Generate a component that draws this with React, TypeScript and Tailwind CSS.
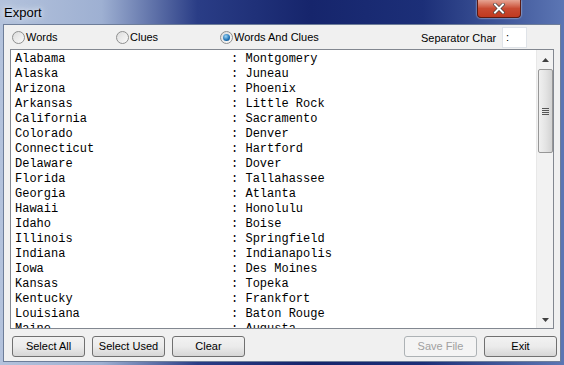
import React from "react";

const data: [string, string][] = [
  ["Alabama", "Montgomery"],
  ["Alaska", "Juneau"],
  ["Arizona", "Phoenix"],
  ["Arkansas", "Little Rock"],
  ["California", "Sacramento"],
  ["Colorado", "Denver"],
  ["Connecticut", "Hartford"],
  ["Delaware", "Dover"],
  ["Florida", "Tallahassee"],
  ["Georgia", "Atlanta"],
  ["Hawaii", "Honolulu"],
  ["Idaho", "Boise"],
  ["Illinois", "Springfield"],
  ["Indiana", "Indianapolis"],
  ["Iowa", "Des Moines"],
  ["Kansas", "Topeka"],
  ["Kentucky", "Frankfort"],
  ["Louisiana", "Baton Rouge"],
  ["Maine", "Augusta"],
  ["Maryland", "Annapolis"],
];

function Radio({ checked, label }: { checked?: boolean; label: string }) {
  return (
    <div className="flex items-center gap-[1px]">
      <div className="w-[13px] h-[13px] rounded-full border border-[#8e8f8f] bg-gradient-to-br from-[#dcdcdc] to-[#fbfbfb] flex items-center justify-center">
        {checked && (
          <div className="w-[7px] h-[7px] rounded-full bg-[radial-gradient(circle_at_40%_35%,#9fd6f5,#1b6fb3_60%,#0b3d6e)]" />
        )}
      </div>
      <span>{label}</span>
    </div>
  );
}

function Btn({ label, disabled }: { label: string; disabled?: boolean }) {
  return (
    <div
      className={
        "w-[73px] h-[21px] rounded-[3px] border flex items-center justify-center " +
        (disabled
          ? "border-[#adb2b5] bg-[#f4f4f4] text-[#a0a0a0]"
          : "border-[#707070] bg-gradient-to-b from-[#f2f2f2] via-[#ebebeb] to-[#d6d6d6] text-black")
      }
    >
      {label}
    </div>
  );
}

export default function App() {
  return (
    <div
      className="w-[564px] h-[365px] overflow-hidden bg-[linear-gradient(90deg,#b3c2dc_0%,#9eb0d2_18%,#2a3d86_35%,#16256c_55%,#1c2f78_75%,#5c76b4_100%)] flex flex-col"
      style={{ fontFamily: '"Liberation Sans", Arial, sans-serif' }}
    >
      {/* title bar */}
      <div className="h-[24px] flex items-start justify-between relative">
        <div className="pl-[4px] pt-[3px] text-[13px] text-black [text-shadow:0_0_8px_#e6ecf5,0_0_4px_#e6ecf5]">
          Export
        </div>
        <div className="mr-[43px] w-[44px] h-[18px] rounded-b-[4px] border border-t-0 border-[#5a1a14] bg-gradient-to-b from-[#e6a493] via-[#c84a32] to-[#c0391f] flex items-center justify-center shadow-[0_0_2px_#fff]">
          <svg width="12" height="11" viewBox="0 0 12 11">
            <path d="M2 1.5 L10 9.5 M10 1.5 L2 9.5" stroke="#333" strokeWidth="3.2" strokeLinecap="square" />
            <path d="M2 1.5 L10 9.5 M10 1.5 L2 9.5" stroke="#fff" strokeWidth="2" strokeLinecap="square" />
          </svg>
        </div>
      </div>
      {/* client */}
      <div className="mx-[3px] mb-[3px] flex-1 border border-[#6d7d99] bg-[#f0f0f0] flex flex-col text-[11px] text-black">
        <div className="h-[24px] relative">
          <div className="absolute left-[8px] top-[4px]"><Radio label="Words" /></div>
          <div className="absolute left-[112px] top-[4px]"><Radio label="Clues" /></div>
          <div className="absolute left-[216px] top-[4px]"><Radio checked label="Words And Clues" /></div>
          <div className="absolute left-[417px] top-[5px]">Separator Char</div>
          <div className="absolute left-[498px] top-[2px] w-[25px] h-[21px] bg-white border border-[#dfe3e8] pl-[3px] leading-[19px]">
            :
          </div>
        </div>
        {/* text area */}
        <div className="mx-[6px] h-[280px] border border-[#828790] bg-white flex">
          <div
            className="flex-1 overflow-hidden pt-[2px] pl-[4px] text-[12px] leading-[15px] whitespace-pre text-black"
            style={{ fontFamily: '"Liberation Mono", "Courier New", monospace' }}
          >
            {data.map(([a, b]) => (
              <div key={a}>{a.padEnd(30, " ") + ": " + b}</div>
            ))}
          </div>
          <div className="w-[17px] bg-[#f2f2f2] border-l border-[#e8e8e8] flex flex-col items-center">
            <div className="h-[19px] flex items-center justify-center">
              <svg width="7" height="4" viewBox="0 0 7 4"><path d="M3.5 0 L7 4 L0 4Z" fill="#404040" /></svg>
            </div>
            <div className="w-[15px] h-[84px] rounded-[2px] border border-[#979797] bg-gradient-to-r from-[#f0f0f0] via-[#e4e4e4] to-[#d3d3d3] flex flex-col items-center justify-center gap-[1px]">
              <div className="w-[7px] h-[1px] bg-[#555]" />
              <div className="w-[7px] h-[1px] bg-[#555]" />
              <div className="w-[7px] h-[1px] bg-[#555]" />
              <div className="w-[7px] h-[1px] bg-[#555]" />
            </div>
            <div className="flex-1" />
            <div className="h-[17px] flex items-center justify-center">
              <svg width="7" height="4" viewBox="0 0 7 4"><path d="M0 0 L7 0 L3.5 4Z" fill="#404040" /></svg>
            </div>
          </div>
        </div>
        <div className="flex items-center pl-[8px] pr-[3px] pt-[7px]">
          <div className="flex gap-[7px]">
            <Btn label="Select All" />
            <Btn label="Select Used" />
            <Btn label="Clear" />
          </div>
          <div className="flex-1" />
          <div className="flex gap-[7px]">
            <Btn label="Save File" disabled />
            <Btn label="Exit" />
          </div>
        </div>
      </div>
    </div>
  );
}
